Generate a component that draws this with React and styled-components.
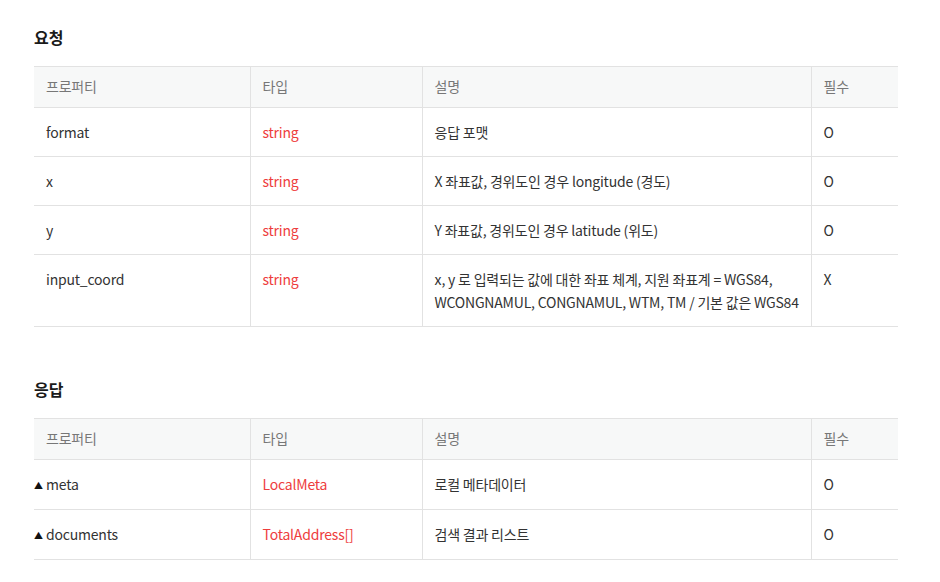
import React from 'react';
import styled, { createGlobalStyle } from 'styled-components';

const GlobalStyle = createGlobalStyle`
    body {
        margin: 0;
        background: #fff;
        font-family: "Noto Sans CJK KR", "Noto Sans", sans-serif;
        color: #333;
    }
`;

const Page = styled.div`
    padding: 24px 42px 0 34px;
`;

const Section = styled.section`
    margin-bottom: 49px;
`;

const Title = styled.h3`
    margin: 0 0 16px;
    font-size: 16px;
    font-weight: 700;
    line-height: 26px;
    color: #1a1a1a;
`;

const Table = styled.table`
    width: 864px;
    border-collapse: collapse;
    table-layout: fixed;
    font-size: 14px;
    line-height: 23px;
    letter-spacing: -0.2px;
`;

const Th = styled.th`
    text-align: left;
    font-weight: 400;
    color: #777;
    background: #f7f8f8;
    padding: 8px 12px 9px;
    border-top: 1px solid #e2e2e2;
    border-bottom: 1px solid #e2e2e2;
    border-left: 1px solid #e2e2e2;
    &:first-child {
        border-left: none;
    }
`;

const Td = styled.td`
    vertical-align: top;
    padding: 13px 4px 12px 12px;
    border-bottom: 1px solid #e2e2e2;
    border-left: 1px solid #e2e2e2;
    color: ${p => (p.$type ? '#ee3d3d' : '#333')};
    &:first-child {
        border-left: none;
    }
`;

const Caret = styled.span`
    display: inline-block;
    width: 12px;
    margin-left: -12px;
    font-size: 9px;
    color: #111;
    vertical-align: 1px;
`;

const widths = ['216px', '172px', '389px', '87px'];

const request = [
    ['format', 'string', '응답 포맷', 'O'],
    ['x', 'string', 'X 좌표값, 경위도인 경우 longitude (경도)', 'O'],
    ['y', 'string', 'Y 좌표값, 경위도인 경우 latitude (위도)', 'O'],
    ['input_coord', 'string', 'x, y 로 입력되는 값에 대한 좌표 체계, 지원 좌표계 = WGS84, WCONGNAMUL, CONGNAMUL, WTM, TM / 기본 값은 WGS84', 'X'],
];

const response = [
    ['meta', 'LocalMeta', '로컬 메타데이터', 'O'],
    ['documents', 'TotalAddress[]', '검색 결과 리스트', 'O'],
];

const PropTable = ({ rows, expandable }) => (
    <Table>
        <colgroup>
            {widths.map(w => <col key={w} style={{ width: w }} />)}
        </colgroup>
        <thead>
            <tr>
                <Th>프로퍼티</Th>
                <Th>타입</Th>
                <Th>설명</Th>
                <Th>필수</Th>
            </tr>
        </thead>
        <tbody>
            {rows.map(([name, type, desc, req]) => (
                <tr key={name}>
                    <Td>
                        {expandable && <Caret>▲</Caret>}
                        {name}
                    </Td>
                    <Td $type>{type}</Td>
                    <Td>{desc}</Td>
                    <Td>{req}</Td>
                </tr>
            ))}
        </tbody>
    </Table>
);

export default function App() {
    return (
        <Page>
            <GlobalStyle />
            <Section>
                <Title>요청</Title>
                <PropTable rows={request} />
            </Section>
            <Section>
                <Title>응답</Title>
                <PropTable rows={response} expandable />
            </Section>
        </Page>
    );
}
